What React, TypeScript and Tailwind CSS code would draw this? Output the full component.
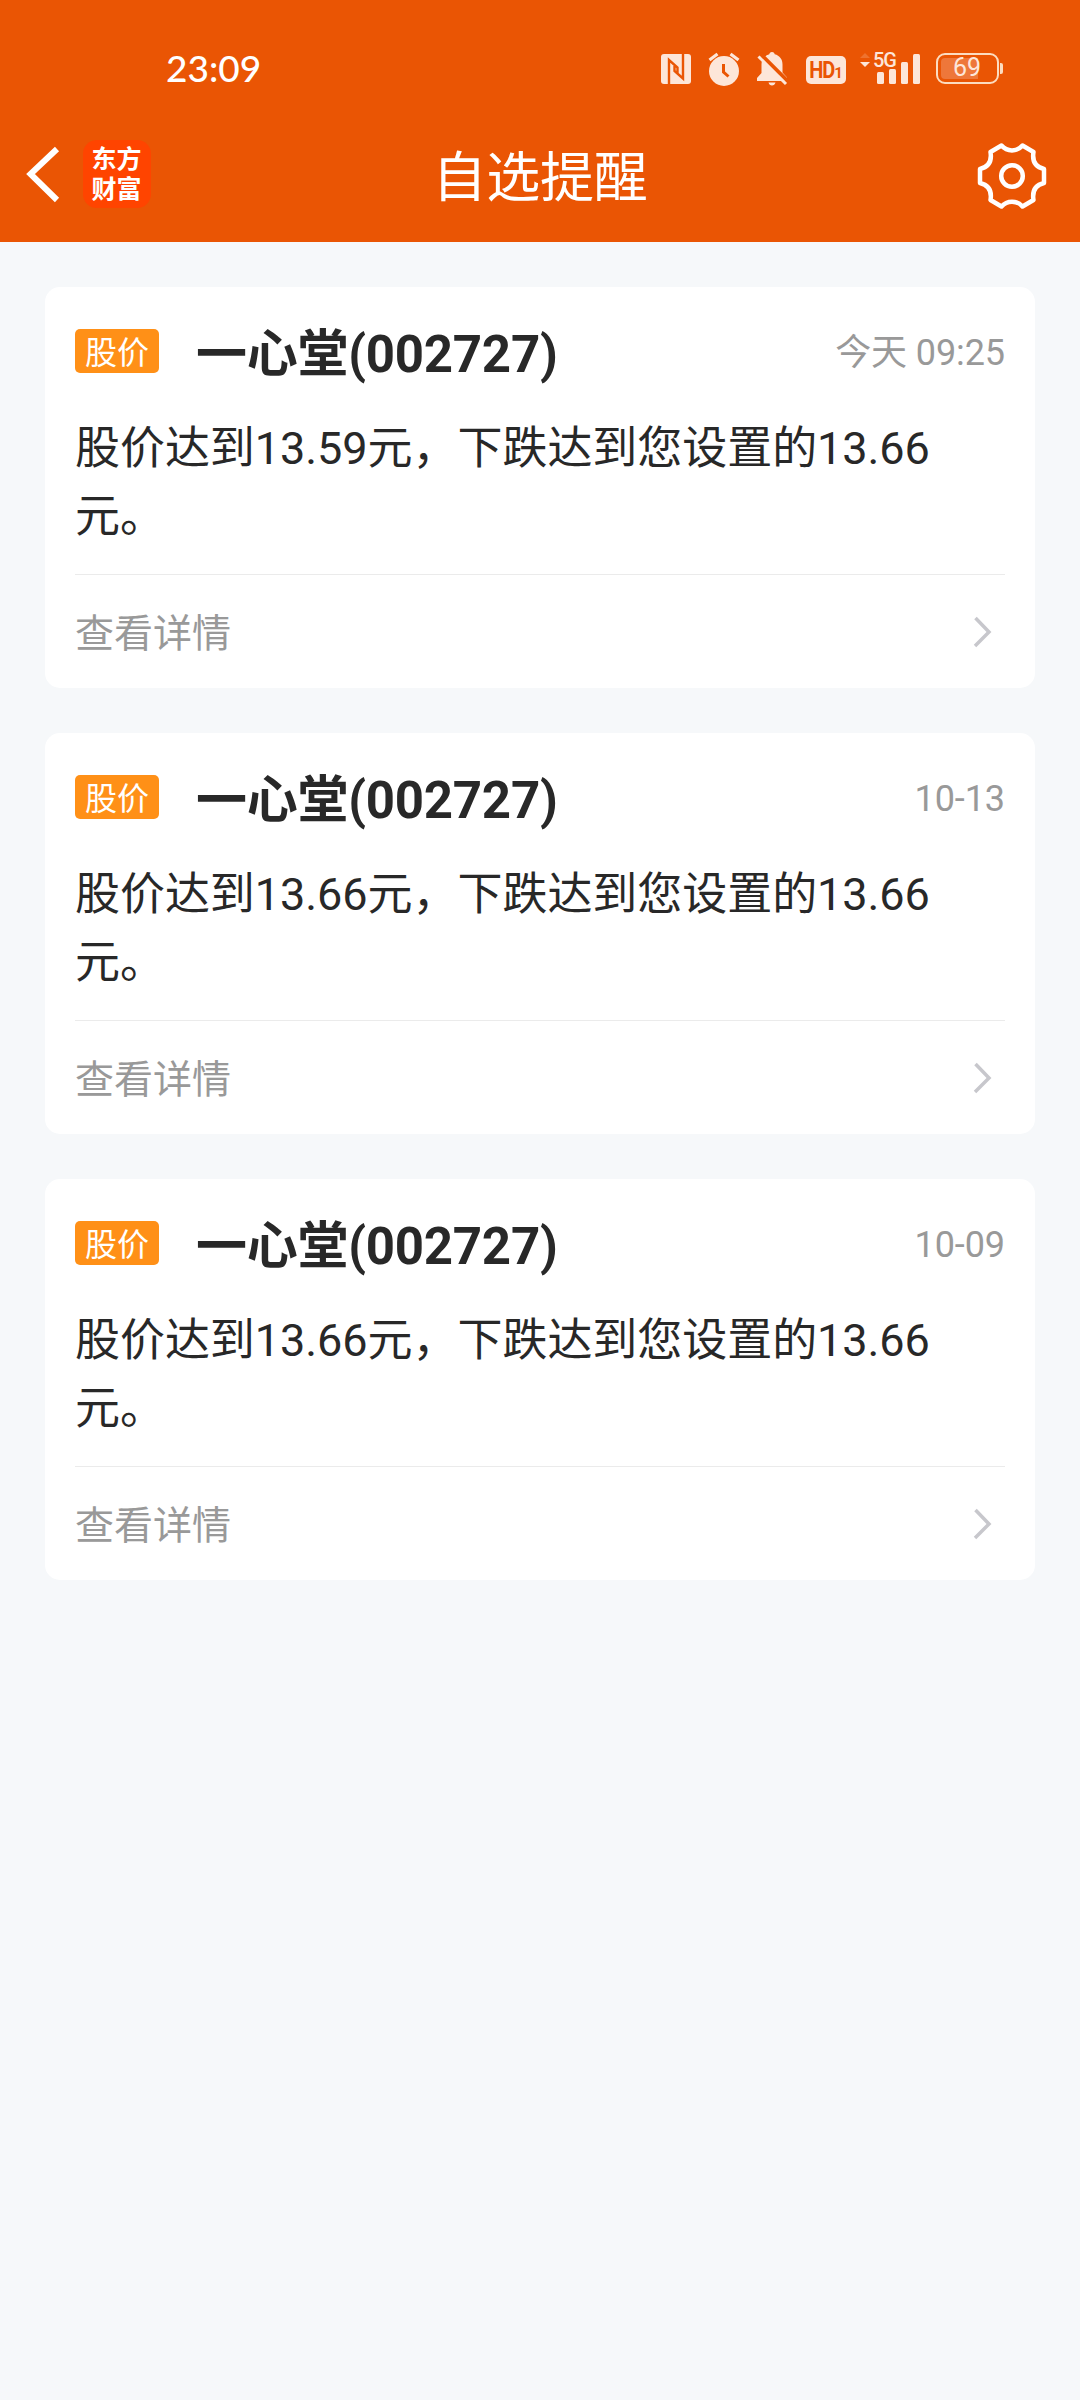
const alerts = [
  { id: 1, name: "一心堂(002727)", time: "今天 09:25", text: "股价达到13.59元，下跌达到您设置的13.66元。" },
  { id: 2, name: "一心堂(002727)", time: "10-13", text: "股价达到13.66元，下跌达到您设置的13.66元。" },
  { id: 3, name: "一心堂(002727)", time: "10-09", text: "股价达到13.66元，下跌达到您设置的13.66元。" },
]

const StatusBar = () => {
  return (
    <div className="flex h-[104px] items-start pl-[166px] pr-[77px] text-[#fde6d9]">
      <span className="mt-[46px] font-['Lato'] text-[37px] font-medium leading-[44px] text-white">23:09</span>

      <div className="ml-auto mt-[50px] flex h-[38px] items-start">
        {/* NFC */}
        <svg className="mt-[4px] h-[30px] w-[30px]" viewBox="0 0 30 30" fill="none">
          <rect width="30" height="30" rx="3" fill="currentColor" />
          <path d="M8 30V6l8.500 7.500V19M22 0v24.500L13.500 17v-5" stroke="#ea5504" strokeWidth="2.400" />
        </svg>

        {/* Alarm */}
        <svg className="ml-[17px] mt-[2px] h-[34px] w-[32px]" viewBox="0 0 32 34" fill="none">
          <circle cx="16" cy="19" r="15" fill="currentColor" />
          <path d="M1.500 8 9.500 2M22.500 2l8 6" stroke="currentColor" strokeWidth="3.200" />
          <path d="M15.500 12v8l5 4.500" stroke="#ea5504" strokeWidth="3" />
        </svg>

        {/* Muted bell */}
        <svg className="ml-[17px] mt-[2px] h-[34px] w-[31px]" viewBox="0 0 31 34" fill="none">
          <path d="M15 0c1.800 0 2.500 1 2.700 2.300 5 1.300 7.800 5 7.800 10.200v8l4.500 5V29H0v-3l4.500-5v-8.500C4.500 7.300 7.500 3.600 12.300 2.300 12.500 1 13.200 0 15 0ZM11.500 30.500h7c-.5 2-1.800 3-3.500 3s-3-1-3.500-3Z" fill="currentColor" />
          <path d="M3 1.500 32 30.500" stroke="#ea5504" strokeWidth="4" />
          <path d="M1.500 4.500 29 32" stroke="currentColor" strokeWidth="3" />
        </svg>

        {/* HD */}
        <div className="ml-[18px] mt-[6px] flex h-[28px] w-[40px] items-center justify-center rounded-[5px] bg-[#fde6d9] font-['Roboto'] font-bold leading-none text-[#ea5504]">
          <span className="origin-center scale-y-115 text-[20px] tracking-[-1px]">HD</span>
          <span className="mt-[6px] text-[15px]">1</span>
        </div>

        {/* Signal */}
        <div className="relative ml-[14px] mt-[2px] h-[32px] w-[60px]">
          <svg className="h-[32px] w-[60px]" viewBox="0 0 60 32" fill="currentColor">
            <path d="M0 6 5 1l5 5Z" opacity=".2" />
            <path d="M0 10h10l-5 5Z" />
            <rect x="17" y="20" width="7" height="12" rx="1.500" />
            <rect x="29" y="17" width="7" height="15" rx="1.500" />
            <rect x="41" y="10" width="7" height="22" rx="1.500" />
            <rect x="53" y="2" width="7" height="30" rx="1.500" />
          </svg>
          <span className="absolute left-[13px] top-[-2px] font-['Roboto'] text-[20px] font-medium leading-[20px] tracking-[-1px]">5G</span>
        </div>

        {/* Battery */}
        <div className="ml-[16px] mt-[3px] flex items-center">
          <div className="relative h-[31px] w-[63px] rounded-[9px] border-[2.5px] border-[#fcdcc0]">
            <div className="absolute left-[3px] top-[3px] h-[21px] w-[37px] rounded-l-[4px] bg-[#ee773a]"></div>
            <span className="absolute left-[15px] top-[-1px] font-['Roboto'] text-[25px] leading-[28px]">69</span>
          </div>
          <div className="ml-[1px] h-[11px] w-[3px] rounded-r-[2px] bg-[#fcdcc0]"></div>
        </div>
      </div>
    </div>
  )
}

const Header = () => {
  return (
    <header className="h-[242px] bg-[#ea5504] text-white">
      <StatusBar />
      <div className="grid h-[138px] grid-cols-3 items-start pl-[26px] pr-[32px]">
        <div className="mt-[36px] flex items-center">
          <svg className="h-[60px] w-[36px]" viewBox="0 0 36 60" fill="none">
            <path d="M31 5 4.500 30 31 56" stroke="currentColor" strokeWidth="6" />
          </svg>
          <div className="ml-[21px] flex h-[68px] w-[68px] justify-center rounded-[14px] bg-[#ff4400]">
            <p className="mt-[2px] w-[51px] break-all font-['Noto_Sans_CJK_SC',sans-serif] text-[25px] font-bold leading-[30px]">东方财富</p>
          </div>
        </div>
        <h1 className="ml-[6px] mt-[35px] whitespace-nowrap text-center text-[54px] leading-[80px] tracking-[-0.3px]">自选提醒</h1>
        <svg className="ml-auto mt-[37px] h-[70px] w-[72px]" viewBox="-36 -35 72 70" fill="none" stroke="currentColor" strokeWidth="4.500" strokeLinejoin="round">
          <path d="M-10.500 -30.500C-5 -24 5 -24 10.500 -30.500L21.500 -24C20 -15 23.500 -9 32 -7V7C23.500 9 20 15 21.500 24L10.500 30.500C5 24 -5 24 -10.500 30.500L-21.500 24C-20 15 -23.500 9 -32 7V-7C-23.500 -9 -20 -15 -21.500 -24Z" />
          <circle r="10.800" />
        </svg>
      </div>
    </header>
  )
}

const AlertCard = ({ name, time, text }: { name: string; time: string; text: string }) => {
  return (
    <div className="h-[401px] rounded-[15px] bg-white px-[30px]">
      <div className="flex h-[125px] items-start">
        <span className="mt-[42px] flex h-[44px] w-[84px] items-center justify-center rounded-[5px] bg-[#ff9017] pt-[3px] text-[32px] leading-none text-white">股价</span>
        <h2 className="ml-[37px] mt-[30px] text-[51px] font-bold leading-[76px] tracking-[-0.25px]">{name}</h2>
        <span className="ml-auto mt-[39px] text-[36px] leading-[54px] tracking-[-0.1px] text-[#999999]">{time}</span>
      </div>
      <p className="h-[162px] pt-[3px] text-[45px] leading-[68px] tracking-[-0.05px]">{text}</p>
      <div className="flex h-[114px] items-center justify-between border-t border-[#ebebeb] pr-[13px] text-[39px] text-[#999999]">
        <span className="pt-[6px]">查看详情</span>
        <svg className="h-[32px] w-[19px]" viewBox="0 0 19 32" fill="none">
          <path d="M2.500 2 16 16 2 30" stroke="#c7c7cc" strokeWidth="3.500" />
        </svg>
      </div>
    </div>
  )
}

const App = () => {
  return (
    <div className="min-h-screen bg-[#f6f8fa] font-['Roboto','Noto_Sans_CJK_SC',sans-serif] text-[#282828]">
      <Header />
      <main className="grid gap-[45px] p-[45px]">
        {alerts.map((item) => (
          <AlertCard key={item.id} name={item.name} time={item.time} text={item.text} />
        ))}
      </main>
    </div>
  )
}

export default App
